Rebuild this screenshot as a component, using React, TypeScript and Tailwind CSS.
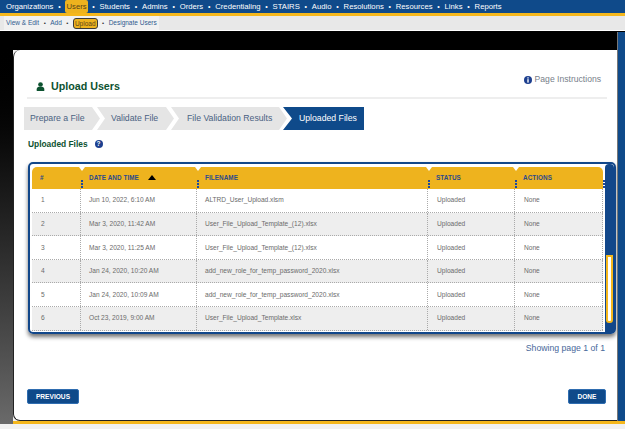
import { Fragment } from "react";
import type { ReactNode } from "react";

const navItems = ["Organizations", "Users", "Students", "Admins", "Orders", "Credentialing", "STAIRS", "Audio", "Resolutions", "Resources", "Links", "Reports"];
const subItems = ["View & Edit", "Add", "Upload", "Designate Users"];

const rows = [
  { id: 1, date: "Jun 10, 2022, 6:10 AM", file: "ALTRD_User_Upload.xlsm" },
  { id: 2, date: "Mar 3, 2020, 11:42 AM", file: "User_File_Upload_Template_(12).xlsx" },
  { id: 3, date: "Mar 3, 2020, 11:25 AM", file: "User_File_Upload_Template_(12).xlsx" },
  { id: 4, date: "Jan 24, 2020, 10:20 AM", file: "add_new_role_for_temp_password_2020.xlsx" },
  { id: 5, date: "Jan 24, 2020, 10:09 AM", file: "add_new_role_for_temp_password_2020.xlsx" },
  { id: 6, date: "Oct 23, 2019, 9:00 AM", file: "User_File_Upload_Template.xlsx" },
];

const gridCols = "grid grid-cols-[49px_116px_231px_87px_88px]";

function Dots() {
  return (
    <span className="absolute right-[-2px] bottom-0 h-[9px] w-[2px] bg-[repeating-linear-gradient(to_bottom,#1d4a9c_0,#1d4a9c_2px,transparent_2px,transparent_3px)]" />
  );
}

function Notch() {
  return <span className="absolute right-[-4px] top-0 h-0 w-0 border-x-[3px] border-t-[4px] border-x-transparent border-t-white" />;
}

function HeaderCell({ label, last, children }: { label: string; last?: boolean; children?: ReactNode }) {
  return (
    <div className="relative flex items-center gap-[9px] pb-[1px] pl-[8px] text-[6.3px] font-bold tracking-[0.1px] text-[#2b4a8c]">
      <span>{label}</span>
      {children}
      {last ? null : <Notch />}
      <Dots />
    </div>
  );
}

export default function App() {
  return (
    <div className="flex h-[429px] w-[625px] flex-col overflow-hidden bg-[#f1f1f1] font-['Liberation_Sans',Arial,sans-serif]">
      <nav className="flex h-[16px] flex-none items-start border-b-[3px] border-[#f5b71c] bg-[#0f4a8a] pl-[6px] text-[7.7px] leading-[13px] text-white">
        {navItems.map((item, i) => (
          <Fragment key={item}>
            {i > 0 ? <span className="mx-[4.8px] text-[7px]">•</span> : null}
            <span className={item === "Users" ? "rounded-[2px] bg-[#eeb31e] px-[1px] text-[#59431a]" : ""}>{item}</span>
          </Fragment>
        ))}
      </nav>
      <div className="flex h-[15px] flex-none items-start border-b border-white bg-[#e8e8e8] pl-[4px]">
        <div className="flex h-[14px] items-center bg-[#f1f1f1] px-[2px] text-[6.5px] text-[#2f5a8f]">
          {subItems.map((item, i) => (
            <Fragment key={item}>
              {i > 0 ? <span className="mx-[4.5px] text-[6px] text-[#333]">•</span> : null}
              <span className={item === "Upload" ? "rounded-[3px] border border-[#3a3a3a] bg-[#eeb31e] px-[1px] leading-[9px] text-[#59431a]" : ""}>{item}</span>
            </Fragment>
          ))}
        </div>
      </div>

      <div className="flex h-[393px] flex-none">
        <div className="w-[13px] bg-gradient-to-b from-black to-[#6a6a6a]" />
        <div className="flex w-[604px] flex-col">
          <div className="h-[19px] flex-none bg-black" />
          <main className="flex h-[371px] flex-none flex-col rounded-tl-[7px] rounded-bl-[7px] border-b border-l border-[#222] bg-white pl-[11px] pr-[10px]">
            <header className="ml-[2px] mt-[22px] flex h-[27px] items-start justify-between border-b-2 border-[#eeeeee] pl-[9px] pr-[6px]">
              <h1 className="mt-[7px] flex items-center gap-[6px] text-[10.7px] font-bold leading-[14px] text-[#0d5230]">
                <svg width="9" height="9" viewBox="0 0 10 10" fill="#0d5230">
                  <circle cx="5" cy="2.8" r="2.6" />
                  <path d="M0.8 10V8c0-1.6 1.2-2.6 2.6-2.6h3.2c1.4 0 2.6 1 2.6 2.6v2z" />
                </svg>
                Upload Users
              </h1>
              <div className="mt-[1px] flex items-center gap-[3px] text-[8.6px] leading-[13px] text-[#77808a]">
                <svg width="8" height="8" viewBox="0 0 8 8">
                  <circle cx="4" cy="4" r="4" fill="#1d3f8f" />
                  <rect x="3.3" y="1.3" width="1.4" height="1.2" fill="#fff" />
                  <rect x="3.3" y="3.2" width="1.4" height="3.4" fill="#fff" />
                </svg>
                Page Instructions
              </div>
            </header>

            <div className="ml-[-1px] mt-[8px] flex h-[23px] flex-none text-[8.7px] text-[#4a6282]">
              <div className="flex w-[76px] items-center bg-[#e5e5e5] pl-[6px] [clip-path:polygon(0_0,calc(100%_-_8px)_0,100%_50%,calc(100%_-_8px)_100%,0_100%)]">Prepare a File</div>
              <div className="ml-[-3px] flex w-[77px] items-center bg-[#e5e5e5] pl-[14px] [clip-path:polygon(0_0,calc(100%_-_8px)_0,100%_50%,calc(100%_-_8px)_100%,0_100%,8px_50%)]">Validate File</div>
              <div className="ml-[-3px] flex w-[116px] items-center bg-[#e5e5e5] pl-[16px] [clip-path:polygon(0_0,calc(100%_-_8px)_0,100%_50%,calc(100%_-_8px)_100%,0_100%,8px_50%)]">File Validation Results</div>
              <div className="ml-[-4px] flex w-[81px] items-center bg-[#0f4a8a] pl-[16px] text-white [clip-path:polygon(0_0,100%_0,100%_100%,0_100%,9px_50%)]">Uploaded Files</div>
            </div>

            <h2 className="ml-[3px] mt-[8px] flex h-[12px] items-center gap-[7px] text-[8.4px] font-bold text-[#0d5230]">
              Uploaded Files
              <span className="flex h-[8px] w-[8px] items-center justify-center rounded-full bg-[#1d3f8f] text-[6.5px] leading-none text-white">?</span>
            </h2>

            <section className="ml-[3px] mt-[12px] flex h-[172px] w-[588px] flex-none rounded-[5px] border-2 border-[#12478a] shadow-[0_3px_4px_rgba(0,0,0,0.55)]">
              <div className="ml-[2px] mt-[3px] w-[571px] flex-none">
                <div className={`${gridCols} h-[22px] rounded-t-[5px] bg-[#eeb31e]`}>
                  <HeaderCell label="#" />
                  <HeaderCell label="DATE AND TIME">
                    <span className="h-0 w-0 border-x-[4px] border-b-[5px] border-x-transparent border-b-black" />
                  </HeaderCell>
                  <HeaderCell label="FILENAME" />
                  <HeaderCell label="STATUS" />
                  <HeaderCell label="ACTIONS" last />
                </div>
                {rows.map((row, i) => (
                  <div key={row.id} className={`${gridCols} h-[23.6px] border-b border-dotted border-[#aaaaaa] text-[6.6px] text-[#6b6b6b] ${i % 2 === 1 ? "bg-[#eeeeee]" : "bg-white"}`}>
                    <div className="flex items-center border-r border-dotted border-[#aaaaaa] pl-[9px]">{row.id}</div>
                    <div className="flex items-center border-r border-dotted border-[#aaaaaa] pl-[8px]">{row.date}</div>
                    <div className="flex items-center border-r border-dotted border-[#aaaaaa] pl-[8px]">{row.file}</div>
                    <div className="flex items-center border-r border-dotted border-[#aaaaaa] pl-[9px]">Uploaded</div>
                    <div className="flex items-center border-r border-dotted border-[#aaaaaa] pl-[9px]">None</div>
                  </div>
                ))}
              </div>
              <div className="ml-[2px] flex w-[10px] flex-col rounded-t-[4px] bg-[#12478a] pb-[5px] pt-[91px]">
                <div className="ml-[1px] h-[68px] w-[7px] rounded-b-[3px] border-2 border-[#f5b71c] bg-white" />
              </div>
            </section>

            <p className="mt-[8px] w-[580px] text-right text-[8.7px] leading-[12px] text-[#48689a]">Showing page 1 of 1</p>

            <div className="ml-[2px] mt-[35px] flex w-[579px] justify-between">
              <button className="h-[15px] w-[52px] rounded-[2px] border border-[#2f6db0] bg-[#0f4a8a] text-[6.6px] font-bold text-white">PREVIOUS</button>
              <button className="h-[15px] w-[38px] rounded-[2px] border border-[#2f6db0] bg-[#0f4a8a] text-[6.6px] font-bold text-white">DONE</button>
            </div>
          </main>
          <div className="h-[3px] flex-none bg-[#f5b71c]" />
        </div>
        <div className="flex w-[8px] flex-col">
          <div className="h-px flex-none bg-black" />
          <div className="flex-1 border-l border-[#777] bg-[#0f4a8a]" />
          <div className="h-[3px] flex-none bg-[#f5b71c]" />
        </div>
      </div>
    </div>
  );
}
